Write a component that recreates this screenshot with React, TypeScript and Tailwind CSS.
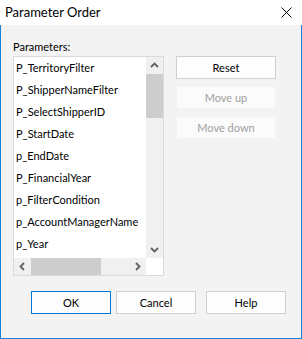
const params = [
  "P_TerritoryFilter",
  "P_ShipperNameFilter",
  "P_SelectShipperID",
  "P_StartDate",
  "p_EndDate",
  "P_FinancialYear",
  "p_FilterCondition",
  "p_AccountManagerName",
  "p_Year",
];

const Chevron = ({ dir }: { dir: "up" | "down" | "left" | "right" }) => {
  const pts = {
    up: "5,10 8.5,6.5 12,10",
    down: "5,7 8.5,10.5 12,7",
    left: "10,5 6.5,8.5 10,12",
    right: "7,5 10.5,8.5 7,12",
  }[dir];
  return (
    <svg width="17" height="17" viewBox="0 0 17 17">
      <polyline points={pts} fill="none" stroke="#606060" strokeWidth="1.8" />
    </svg>
  );
};

const App = () => {
  return (
    <div
      className="w-[302px] h-[339px] flex flex-col bg-[#f0f0f0] text-black text-[11px]"
      style={{ fontFamily: 'Lato, "Liberation Sans", sans-serif' }}
    >
      {/* Title bar */}
      <div className="h-[25px] shrink-0 bg-white flex items-center justify-between pl-[5px] pr-[10px]">
        <span className="leading-none text-[13px]">Parameter Order</span>
        <svg width="11" height="11" viewBox="0 0 11 11">
          <path d="M0.5 0.5 L10.5 10.5 M10.5 0.5 L0.5 10.5" stroke="#000" strokeWidth="1" />
        </svg>
      </div>

      {/* Body */}
      <div className="flex-1 flex flex-col border-x border-b border-[#1883d7] bg-[#f3f3f3] px-[12px]">
        <div className="h-[31px] pt-[14px] leading-[15px]">Parameters:</div>

        <div className="flex gap-[12px]">
          {/* List box */}
          <div className="w-[151px] h-[220px] border border-[#dadada] bg-white grid grid-cols-[132px_17px] grid-rows-[201px_17px]">
            <div className="overflow-hidden">
              {params.map((p) => (
                <div key={p} className="h-[22px] leading-[22px] pl-[2px] whitespace-nowrap">
                  {p}
                </div>
              ))}
            </div>
            {/* Vertical scrollbar */}
            <div className="bg-[#f0f0f0] flex flex-col">
              <Chevron dir="up" />
              <div className="h-[44px] bg-[#cdcdcd]" />
              <div className="flex-1" />
              <Chevron dir="down" />
            </div>
            {/* Horizontal scrollbar */}
            <div className="bg-[#f0f0f0] flex">
              <Chevron dir="left" />
              <div className="w-[70px] h-full bg-[#cdcdcd]" />
              <div className="flex-1" />
              <Chevron dir="right" />
            </div>
            <div className="bg-white" />
          </div>

          {/* Side buttons */}
          <div className="flex flex-col gap-[7px]">
            <button className="w-[100px] h-[23px] border border-[#d0d0d0] bg-[#fdfdfd] leading-none">
              Reset
            </button>
            <button className="w-[100px] h-[23px] border border-[#f3f3f3] bg-[#fbfbfb] text-[#a0a0a0] leading-none">
              Move up
            </button>
            <button className="w-[100px] h-[23px] border border-[#f3f3f3] bg-[#fbfbfb] text-[#a0a0a0] leading-none">
              Move down
            </button>
          </div>
        </div>

        {/* Bottom buttons */}
        <div className="flex mt-[15px] pl-[18px]">
          <button className="w-[80px] h-[23px] border border-[#0078d7] bg-[#fdfdfd] leading-none">OK</button>
          <button className="ml-[5px] w-[80px] h-[23px] border border-[#d0d0d0] bg-[#fdfdfd] leading-none">
            Cancel
          </button>
          <button className="ml-[10px] w-[80px] h-[23px] border border-[#d0d0d0] bg-[#fdfdfd] leading-none">
            Help
          </button>
        </div>
      </div>
    </div>
  );
};

export default App;
